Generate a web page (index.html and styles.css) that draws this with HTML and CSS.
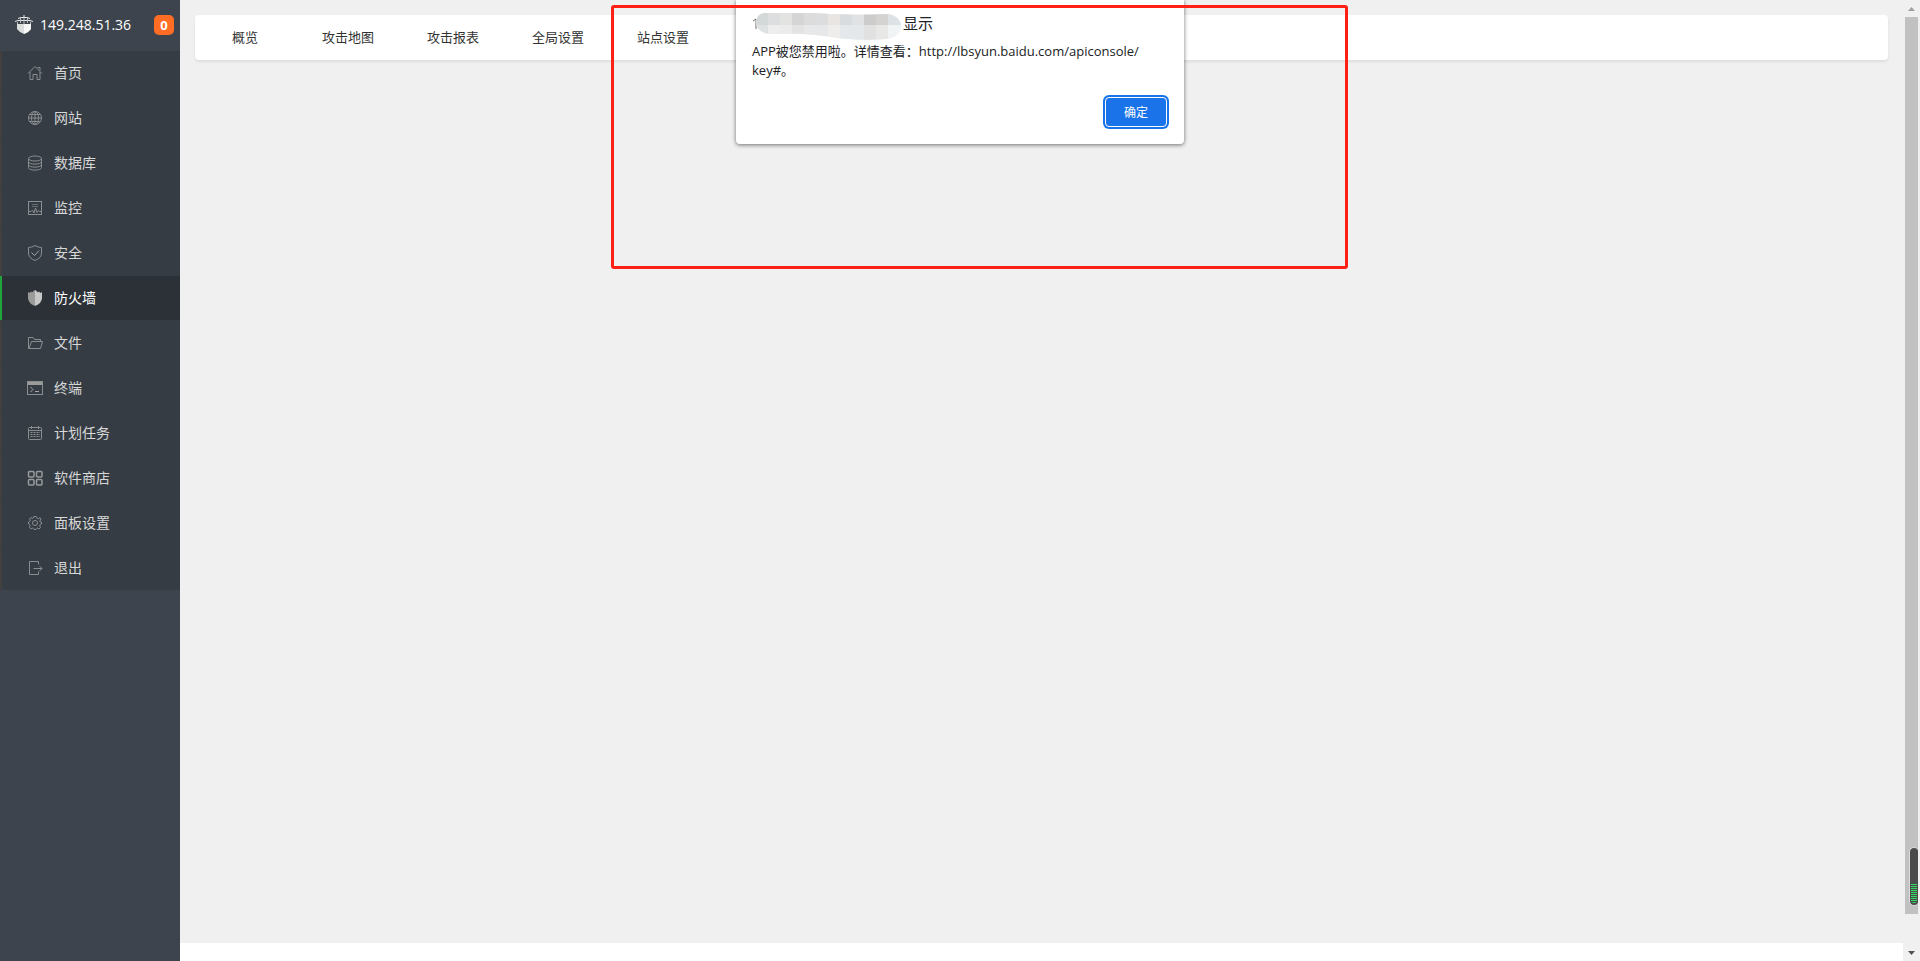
FILE: index.html
```html
<!DOCTYPE html>
<html lang="zh-CN">
<head>
    <meta charset="UTF-8">
    <meta name="viewport" content="width=device-width, initial-scale=1.0">
    <title>防火墙</title>
    <link rel="stylesheet" href="styles.css">
</head>
<body>

<div class="layout">
    <aside class="sidebar">
        <div class="server">
            <svg class="server-logo" viewBox="0 0 18 19" width="18" height="19">
                <path d="M2 9 H16 V14 Q14 17 9 19 Q4 17 2 14 Z" fill="#dcdddd"/>
                <path d="M9 9 H16 V14 Q14 17 9 19 Z" fill="#f7f7f7"/>
                <path d="M0 6.5 L3 5.5 H15 L18 6.5 M3 3.5 L6 2.5 H12 L15 3.5 M9 0 V3" fill="none" stroke="#e6e8ea"/>
                <path d="M2.5 7 V9 M5.5 3 V8 M9 3 V9 M12.5 3 V8 M15.5 7 V9" fill="none" stroke="#b9bdc1"/>
            </svg>
            <span class="server-ip">149.248.51.36</span>
            <span class="badge">0</span>
        </div>
        <nav>
            <ul class="menu">
                <li><a href="#">
                    <svg class="icon" viewBox="0 0 16 16"><path d="M1 8.5 L8 1.5 L15 8.5 M3 7 V14.5 H6 V9.5 H10 V14.5 H13 V7 M10.5 2.5 H13 V5.5"/></svg>
                    首页</a></li>
                <li><a href="#">
                    <svg class="icon" viewBox="0 0 16 16"><circle cx="8" cy="8" r="6.5"/><ellipse cx="8" cy="8" rx="3.5" ry="6.5"/><path d="M1.5 8 H14.5 M8 1.5 V14.5 M2.5 4.5 H13.5 M2.5 11.5 H13.5"/></svg>
                    网站</a></li>
                <li><a href="#">
                    <svg class="icon" viewBox="0 0 16 16"><ellipse cx="8" cy="3.5" rx="6.5" ry="2.5"/><path d="M1.5 3.5 V12.5 C1.5 16 14.5 16 14.5 12.5 V3.5 M1.5 6.5 C1.5 10 14.5 10 14.5 6.5 M1.5 9.5 C1.5 13 14.5 13 14.5 9.5"/></svg>
                    数据库</a></li>
                <li><a href="#">
                    <svg class="icon" viewBox="0 0 16 16"><rect x="1.5" y="1.5" width="13" height="13"/><path d="M5 4.5 H11 M5 6.5 H11" opacity="0.6"/><path d="M1.5 11.5 H4 L5.5 10 L7 13 L8.5 8 L10 12.5 L11.5 10.5 L12.5 11.5 H14.5"/></svg>
                    监控</a></li>
                <li><a href="#">
                    <svg class="icon" viewBox="0 0 16 16"><path d="M8 0.5 Q11 2.5 14.5 2.5 V8 Q14.5 13 8 15.5 Q1.5 13 1.5 8 V2.5 Q5 2.5 8 0.5 Z"/><path class="check" d="M4.5 7.5 L7.5 10.5 L12 5.5"/></svg>
                    安全</a></li>
                <li class="current"><a href="#">
                    <svg class="icon" viewBox="0 0 16 16"><path class="solid" d="M1 2 L2.5 3 L4 1.5 L5 2.5 L6.5 1 L8 0 V16 Q1 13 1 8 Z"/><path class="solid light" d="M15 2 L13.5 3 L12 1.5 L11 2.5 L9.5 1 L8 0 V16 Q15 13 15 8 Z"/></svg>
                    防火墙</a></li>
                <li><a href="#">
                    <svg class="icon" viewBox="0 0 16 16"><path d="M3 13.5 H1.5 V2.5 H6 L7.5 4.5 H13.5 V6.5 M2 13.5 L4.5 6.5 H15.5 L13.5 13.5 Z"/></svg>
                    文件</a></li>
                <li><a href="#">
                    <svg class="icon" viewBox="0 0 16 16"><rect x="0.5" y="1.5" width="15" height="13"/><path class="solid" d="M1 2 H15 V5 H1 Z"/><path class="check" d="M3.5 7 L6 9.5 L3.5 12 M8 11.5 H12"/></svg>
                    终端</a></li>
                <li><a href="#">
                    <svg class="icon" viewBox="0 0 16 16"><rect x="1.5" y="2.5" width="13" height="12" rx="1"/><path d="M1.5 5.5 H14.5 M4.5 1 V4 M11.5 1 V4"/><path d="M3.5 7.5 H13 M3.5 9.5 H13 M3.5 11.5 H13" stroke-dasharray="2 1"/></svg>
                    计划任务</a></li>
                <li><a href="#">
                    <svg class="icon bold" viewBox="0 0 16 16"><rect x="1.5" y="1.5" width="5.5" height="5.5" rx="1"/><rect x="9.5" y="1.5" width="5.5" height="5.5" rx="1"/><rect x="1.5" y="9.5" width="5.5" height="5.5" rx="1"/><rect x="9.5" y="9.5" width="5.5" height="5.5" rx="1"/></svg>
                    软件商店</a></li>
                <li><a href="#">
                    <svg class="icon" viewBox="0 0 16 16"><path d="M6.8 1.5 H9.2 L9.7 3 L11.5 3.7 L13 2.6 L14 4 L12.8 6 L13.2 7 L14.5 7.2 V9 L13.2 9.5 L12.7 11 L13.6 12.6 L12 14 L10.4 13 L9.5 13.4 L9 14.5 H7 L6.4 13.4 L5.2 13 L3.8 13.8 L2.3 12.2 L3.2 10.6 L2.8 9.5 L1.5 9 V7 L2.8 6.6 L3.3 5.2 L2.5 3.8 L3.8 2.5 L5.3 3.4 L6.3 3 Z"/><circle cx="8" cy="8" r="2.5"/></svg>
                    面板设置</a></li>
                <li><a href="#">
                    <svg class="icon" viewBox="0 0 16 16"><path d="M11.5 4.5 V1.5 H2.5 V14.5 H11.5 V11.5 M6.5 8.5 H15 M12.5 6 L15 8.5 L12.5 11"/></svg>
                    退出</a></li>
            </ul>
        </nav>
    </aside>

    <main class="main">
        <div class="content">
            <nav class="tabs">
                <a href="#">概览</a>
                <a href="#">攻击地图</a>
                <a href="#">攻击报表</a>
                <a href="#">全局设置</a>
                <a href="#">站点设置</a>
            </nav>
        </div>
    </main>

    <div class="scrollbar">
        <svg class="arrow up" viewBox="0 0 17 17"><path d="M5 11 L8.5 7 L12 11 Z"/></svg>
        <div class="thumb">
            <div class="meter"><div class="meter-level"></div></div>
        </div>
        <svg class="arrow" viewBox="0 0 17 17"><path d="M5 7 L8.5 11 L12 7 Z"/></svg>
    </div>
</div>

<div class="dialog" role="alertdialog" aria-labelledby="dialogTitle" aria-describedby="dialogText">
    <div class="dialog-title" id="dialogTitle">
        <svg class="mosaic" viewBox="0 0 150 28" width="150" height="28">
            <defs>
                <clipPath id="smear"><path d="M12 1 H60 Q100 4 136 2 Q149 4 149 16 Q147 25 134 27 Q104 29 80 25 Q50 20 18 22 Q4 20 4 10 Q5 2 12 1 Z"/></clipPath>
            </defs>
            <path d="M1 9 L4 7 V17" fill="none" stroke="#75706c"/>
            <g clip-path="url(#smear)">
                <rect width="150" height="28" fill="#e4e5e6"/>
                <rect width="16" height="13" fill="#d3d8d9"/>
                <rect x="16" width="12" height="13" fill="#dddedf"/>
                <rect x="28" width="12" height="13" fill="#e3e3e2"/>
                <rect x="40" width="12" height="13" fill="#d5d5d6"/>
                <rect x="52" width="12" height="13" fill="#dcdcdd"/>
                <rect x="64" width="12" height="13" fill="#dbdddf"/>
                <rect x="76" width="12" height="13" fill="#e8e5e2"/>
                <rect x="88" width="12" height="13" fill="#d8dcdf"/>
                <rect x="100" width="12" height="13" fill="#e0e2e4"/>
                <rect x="112" width="12" height="13" fill="#cdcccc"/>
                <rect x="124" width="12" height="13" fill="#d5d3d1"/>
                <rect x="136" width="14" height="13" fill="#dde2e6"/>
                <rect y="13" width="16" height="15" fill="#dfe2e3"/>
                <rect x="16" y="13" width="12" height="15" fill="#eeeeee"/>
                <rect x="28" y="13" width="12" height="15" fill="#ebebec"/>
                <rect x="40" y="13" width="12" height="15" fill="#e3e3e4"/>
                <rect x="52" y="13" width="24" height="15" fill="#e7e8ea"/>
                <rect x="76" y="13" width="12" height="15" fill="#efedeb"/>
                <rect x="88" y="13" width="24" height="15" fill="#e5e8ea"/>
                <rect x="112" y="13" width="12" height="15" fill="#e1e1e1"/>
                <rect x="124" y="13" width="12" height="15" fill="#e8e8e7"/>
                <rect x="136" y="13" width="14" height="15" fill="#f1f4f5"/>
            </g>
        </svg>
        <span>显示</span>
    </div>
    <p class="dialog-text" id="dialogText">APP被您禁用啦。详情查看：http://lbsyun.baidu.com/apiconsole/<wbr>key#。</p>
    <div class="dialog-actions">
        <button type="button" class="ok-btn">确定</button>
    </div>
</div>

<div class="highlight"></div>

</body>
</html>
```

FILE: styles.css
```css
* {
    box-sizing: border-box;
}

body {
    margin: 0;
    font-family: "Open Sans", "Noto Sans CJK SC", sans-serif;
    font-size: 14px;
    color: #333;
    background-color: #fff;
}

a {
    color: inherit;
    text-decoration: none;
}

.layout {
    display: flex;
    height: 100vh;
    overflow: hidden;
}

/* Sidebar */
.sidebar {
    flex: 0 0 180px;
    background-color: #3d444d;
}

.server {
    display: flex;
    align-items: center;
    height: 51px;
    padding: 0 6px 2px 15px;
    color: #fff;
}

.server-ip {
    margin-left: 7px;
}

.badge {
    width: 20px;
    height: 20px;
    margin-left: auto;
    border-radius: 5px;
    background-color: #ff6c24;
    font-size: 13px;
    font-weight: 700;
    line-height: 20px;
    text-align: center;
}

.menu {
    display: flex;
    flex-direction: column;
    gap: 1px;
    margin: 0;
    padding: 0;
    list-style: none;
    background-color: #353c43;
}

.menu a {
    display: flex;
    align-items: center;
    gap: 11px;
    height: 44px;
    padding: 0 0 1px 25px;
    border-left: 2px solid #423f3f;
    color: #d8d8d8;
    line-height: 20px;
}

.menu .current a {
    border-left-color: #20a53a;
    background-color: #2c3138;
    color: #fff;
}

.icon {
    width: 16px;
    height: 16px;
    margin-top: 1px;
    fill: none;
    stroke: #8a8e91;
    stroke-width: 1;
}

.icon.bold {
    stroke: #989b9d;
    stroke-width: 1.5;
}

.icon .check {
    stroke: #a5a8aa;
}

.icon .solid {
    fill: #9b9b9b;
    stroke: none;
}

.icon .light {
    fill: #c8c8c8;
}

/* Content */
.main {
    display: flex;
    flex: 1;
    padding-bottom: 18px;
}

.content {
    flex: 1;
    padding: 15px;
    background-color: #f0f0f0;
}

.tabs {
    display: flex;
    gap: 1px;
    height: 45px;
    border-radius: 4px;
    background-color: #fff;
    box-shadow: 0 2px 3px rgba(0, 0, 0, 0.08);
    font-size: 13px;
    line-height: 45px;
    text-align: center;
}

.tabs a {
    width: 104px;
}

.tabs a:first-child {
    width: 100px;
}

/* Scrollbar */
.scrollbar {
    display: flex;
    flex: 0 0 17px;
    flex-direction: column;
    background-color: #f0f0f0;
}

.arrow {
    width: 17px;
    height: 17px;
    margin-top: auto;
    fill: #505050;
}

.arrow.up {
    margin-top: 0;
    fill: #a0a0a0;
}

.thumb {
    display: flex;
    align-items: flex-end;
    justify-content: flex-end;
    height: calc(100% - 64px);
    margin: 0 2px;
    padding-bottom: 8px;
    background-color: #c1c1c1;
}

.meter {
    display: flex;
    align-items: flex-end;
    width: 9px;
    height: 59px;
    padding: 2px 1px;
    border: 1px solid #ddd;
    border-right: 0;
    border-radius: 5px 4px 4px 5px;
    background-color: #4a4a4a;
}

.meter-level {
    width: 100%;
    height: 19px;
    border-radius: 0 0 3px 3px;
    background: repeating-linear-gradient(#2fd860 0, #2fd860 1px, #4a4a4a 1px, #4a4a4a 2px);
}

/* Alert dialog, hangs from the top edge of the window */
.dialog {
    position: absolute;
    top: 0;
    left: calc(50% - 224px);
    width: 448px;
    padding: 12px 17px 17px 16px;
    border-radius: 0 0 4px 4px;
    background-color: #fff;
    box-shadow: 0 1px 4px rgba(0, 0, 0, 0.55);
    color: #202124;
}

.dialog-title {
    display: flex;
    gap: 1px;
    height: 28px;
    font-size: 15px;
    line-height: 22px;
}

.dialog-text {
    width: 400px;
    margin: 2px 0 17px;
    font-size: 13px;
    line-height: 19px;
}

.dialog-actions {
    display: flex;
    justify-content: flex-end;
}

.ok-btn {
    width: 62px;
    height: 30px;
    border: 1px solid #fff;
    border-radius: 4px;
    background-color: #1a73e8;
    box-shadow: 0 0 0 2px #1a73e8;
    color: #fff;
    font-family: inherit;
    font-size: 12px;
}

.highlight {
    position: absolute;
    top: 5px;
    left: 611px;
    width: 737px;
    height: 264px;
    border: 3px solid #ff1f14;
    border-radius: 3px;
    pointer-events: none;
}
```
